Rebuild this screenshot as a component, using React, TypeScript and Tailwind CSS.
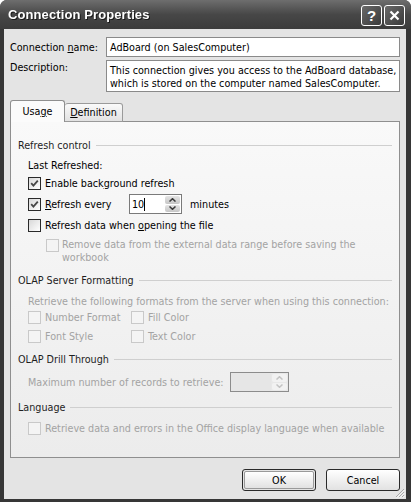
import React from "react";

function Box({ checked = false, disabled = false }: { checked?: boolean; disabled?: boolean }) {
  return (
    <span
      className={
        disabled
          ? "block w-[13px] h-[13px] shrink-0 border border-[#c9c9c9] bg-[#f4f4f4]"
          : "flex w-[13px] h-[13px] shrink-0 border border-[#2a2a2a] bg-gradient-to-br from-[#d8d8d8] to-white items-center justify-center"
      }
    >
      {checked && (
        <svg width="9" height="9" viewBox="0 0 9 9">
          <path d="M1.2 4.2 L3.4 6.6 L7.8 1.6" stroke="#474747" strokeWidth="1.8" fill="none" />
        </svg>
      )}
    </span>
  );
}

function GroupHeader({ title, className = "" }: { title: string; className?: string }) {
  return (
    <div className={"flex items-center h-[14px] pl-[7px] pr-[7px] " + className}>
      <span className="text-[#1e1e1e] whitespace-nowrap">{title}</span>
      <span className="flex-1 h-px bg-[#cfcfcf] ml-[5px]" />
    </div>
  );
}

function SpinArrows({ disabled = false }: { disabled?: boolean }) {
  const c = disabled ? "#c4c4c4" : "#3a3a3a";
  return (
    <div
      className={
        disabled
          ? "w-[17px] flex flex-col gap-px p-px bg-[#e8e8e8]"
          : "w-[17px] flex flex-col gap-px p-px bg-white"
      }
    >
      <div
        className={
          disabled
            ? "flex-1 rounded-[2px] bg-[#f2f2f2] flex items-center justify-center"
            : "flex-1 rounded-[2px] bg-gradient-to-b from-[#e4e4e4] to-[#c6c6c6] flex items-center justify-center"
        }
      >
        <svg width="7" height="4" viewBox="0 0 7 4">
          <path d="M0.5 3.5 L3.5 0.7 L6.5 3.5" stroke={c} strokeWidth="1.5" fill="none" />
        </svg>
      </div>
      <div
        className={
          disabled
            ? "flex-1 rounded-[2px] bg-[#f2f2f2] flex items-center justify-center"
            : "flex-1 rounded-[2px] bg-gradient-to-b from-[#e4e4e4] to-[#c6c6c6] flex items-center justify-center"
        }
      >
        <svg width="7" height="4" viewBox="0 0 7 4">
          <path d="M0.5 0.5 L3.5 3.3 L6.5 0.5" stroke={c} strokeWidth="1.5" fill="none" />
        </svg>
      </div>
    </div>
  );
}

export default function App() {
  return (
    <div className="w-[411px] h-[502px] flex flex-col rounded-t-[7px] overflow-hidden bg-[#363636] text-[10.7px] leading-[13px] text-black [font-family:'DejaVu_Sans_Condensed','DejaVu_Sans',sans-serif] [font-stretch:condensed]">
      {/* Title bar */}
      <div className="h-[29px] shrink-0 flex items-center bg-gradient-to-b from-[#6e6e6e] via-[#474747] to-[#3c3c3c] pl-[8px] pr-[6px]">
        <span className="flex-1 text-white font-bold text-[13px] [font-family:'Liberation_Sans',sans-serif] [font-stretch:normal] tracking-[0.1px] drop-shadow-[1px_1px_0_#1a1a1a]">
          Connection Properties
        </span>
        <div className="flex gap-[2px] mt-[1px]">
          <div className="w-[21px] h-[21px] rounded-[3px] border border-white bg-gradient-to-br from-[#6a6a6a] to-[#3a3a3a] flex items-center justify-center text-white font-bold text-[15px] [font-family:'Liberation_Sans',sans-serif] [font-stretch:normal]">
            ?
          </div>
          <div className="w-[21px] h-[21px] rounded-[3px] border border-white bg-gradient-to-br from-[#6a6a6a] to-[#3a3a3a] flex items-center justify-center">
            <svg width="11" height="11" viewBox="0 0 11 11">
              <path d="M1.5 1.5 L9.5 9.5 M9.5 1.5 L1.5 9.5" stroke="white" strokeWidth="2.2" />
            </svg>
          </div>
        </div>
      </div>

      {/* Client area */}
      <div className="relative flex-1 ml-[4px] mr-[5px] mb-[3px] bg-[#e4e4e4] flex flex-col">
        {/* Connection name */}
        <div className="flex mt-[8px]">
          <div className="w-[102px] pl-[6px] flex items-center whitespace-nowrap">
            Connection&nbsp;<span className="underline">n</span>ame:
          </div>
          <div className="w-[294px] h-[20px] border border-[#8a8a8a] bg-white flex items-center pl-[3px]">
            AdBoard (on SalesComputer)
          </div>
        </div>
        {/* Description */}
        <div className="flex mt-[3px]">
          <div className="w-[102px] pl-[6px] pt-[1px]">Description:</div>
          <div className="w-[294px] h-[32px] border border-[#8a8a8a] bg-white pl-[3px] pt-[3px] whitespace-nowrap overflow-hidden">
            <div>This connection gives you access to the AdBoard database,</div>
            <div>which is stored on the computer named SalesComputer.</div>
          </div>
        </div>

        {/* Tabs */}
        <div className="flex items-end ml-[6px] mt-[8px] h-[22px] relative z-10">
          <div className="w-[55px] h-[22px] rounded-t-[3px] border border-b-0 border-[#8f8f8f] bg-[#fbfbfb] flex items-center justify-center pb-[1px]">
            Usa<span className="underline">g</span>e
          </div>
          <div className="w-[58px] h-[19px] rounded-t-[3px] border border-l-0 border-[#9a9a9a] bg-gradient-to-b from-[#fafafa] to-[#e2e2e2] flex items-center justify-center">
            <span className="underline">D</span>efinition
          </div>
        </div>

        {/* Tab panel */}
        <div className="ml-[6px] mr-[6px] -mt-px h-[337px] border border-[#8f8f8f] bg-gradient-to-b from-[#f9f9f9] to-[#ececec] flex flex-col">
          <GroupHeader title="Refresh control" className="mt-[16px]" />
          <div className="pl-[17px] mt-[6px] h-[14px] flex items-center">Last Refreshed:</div>
          <div className="pl-[17px] mt-[4px] h-[14px] flex items-center">
            <Box checked />
            <span className="ml-[4px]">
              Enable back<span className="underline">g</span>round refresh
            </span>
          </div>
          <div className="pl-[17px] mt-[4px] h-[20px] flex items-center">
            <Box checked />
            <span className="ml-[4px] w-[84px]">
              <span className="underline">R</span>efresh every
            </span>
            <div className="w-[53px] h-[20px] border border-[#7a7a7a] bg-white flex">
              <div className="flex-1 flex items-center pl-[2px]">
                10<span className="w-px h-[13px] bg-black" />
              </div>
              <SpinArrows />
            </div>
            <span className="ml-[8px]">minutes</span>
          </div>
          <div className="pl-[17px] mt-[4px] h-[14px] flex items-center">
            <Box />
            <span className="ml-[4px]">
              Refresh data when <span className="underline">o</span>pening the file
            </span>
          </div>
          <div className="pl-[35px] mt-[6px] flex items-start text-[#a3a3a3]">
            <span className="mt-[1px]">
              <Box disabled />
            </span>
            <span className="ml-[3px] w-[310px]">
              Remove data from the external data range before saving the workbook
            </span>
          </div>

          <GroupHeader title="OLAP Server Formatting" className="mt-[9px]" />
          <div className="pl-[17px] mt-[7px] h-[14px] flex items-center text-[#a3a3a3] whitespace-nowrap">
            Retrieve the following formats from the server when using this connection:
          </div>
          <div className="pl-[17px] mt-[2px] grid grid-cols-[103px_1fr] gap-y-[5px] text-[#a3a3a3]">
            <div className="h-[14px] flex items-center">
              <Box disabled />
              <span className="ml-[4px]">Number Format</span>
            </div>
            <div className="h-[14px] flex items-center">
              <Box disabled />
              <span className="ml-[4px]">Fill Color</span>
            </div>
            <div className="h-[14px] flex items-center">
              <Box disabled />
              <span className="ml-[4px]">Font Style</span>
            </div>
            <div className="h-[14px] flex items-center">
              <Box disabled />
              <span className="ml-[4px]">Text Color</span>
            </div>
          </div>

          <GroupHeader title="OLAP Drill Through" className="mt-[9px]" />
          <div className="pl-[17px] mt-[6px] h-[20px] flex items-center text-[#a3a3a3]">
            <span className="w-[202px]">Maximum number of records to retrieve:</span>
            <div className="w-[59px] h-[20px] border border-[#8c8c8c] bg-[#e6e6e6] flex">
              <div className="flex-1" />
              <SpinArrows disabled />
            </div>
          </div>

          <GroupHeader title="Language" className="mt-[8px]" />
          <div className="pl-[17px] mt-[7px] h-[14px] flex items-center text-[#a3a3a3] whitespace-nowrap">
            <Box disabled />
            <span className="ml-[4px]">Retrieve data and errors in the Office display language when available</span>
          </div>
        </div>

        {/* Buttons */}
        <div className="flex justify-end gap-[10px] mr-[6px] mt-[11px]">
          <div className="w-[74px] h-[22px] rounded-[3px] border border-[#2a2a2a] p-px">
            <div className="w-full h-full rounded-[2px] border border-[#9a9a9a] bg-gradient-to-b from-white to-[#e2e2e2] flex items-center justify-center">
              OK
            </div>
          </div>
          <div className="w-[74px] h-[22px] rounded-[3px] border border-[#2a2a2a] bg-gradient-to-b from-white to-[#e2e2e2] flex items-center justify-center">
            Cancel
          </div>
        </div>

        {/* Resize grip */}
        <svg className="absolute right-[1px] bottom-[1px]" width="11" height="11" viewBox="0 0 11 11">
          <path d="M10 2 L2 10 M10 5 L5 10 M10 8 L8 10" stroke="#a8a8a8" strokeWidth="1" />
          <path d="M10.8 2.8 L2.8 10.8 M10.8 5.8 L5.8 10.8 M10.8 8.8 L8.8 10.8" stroke="#ffffff" strokeWidth="0.8" />
        </svg>
      </div>
    </div>
  );
}
